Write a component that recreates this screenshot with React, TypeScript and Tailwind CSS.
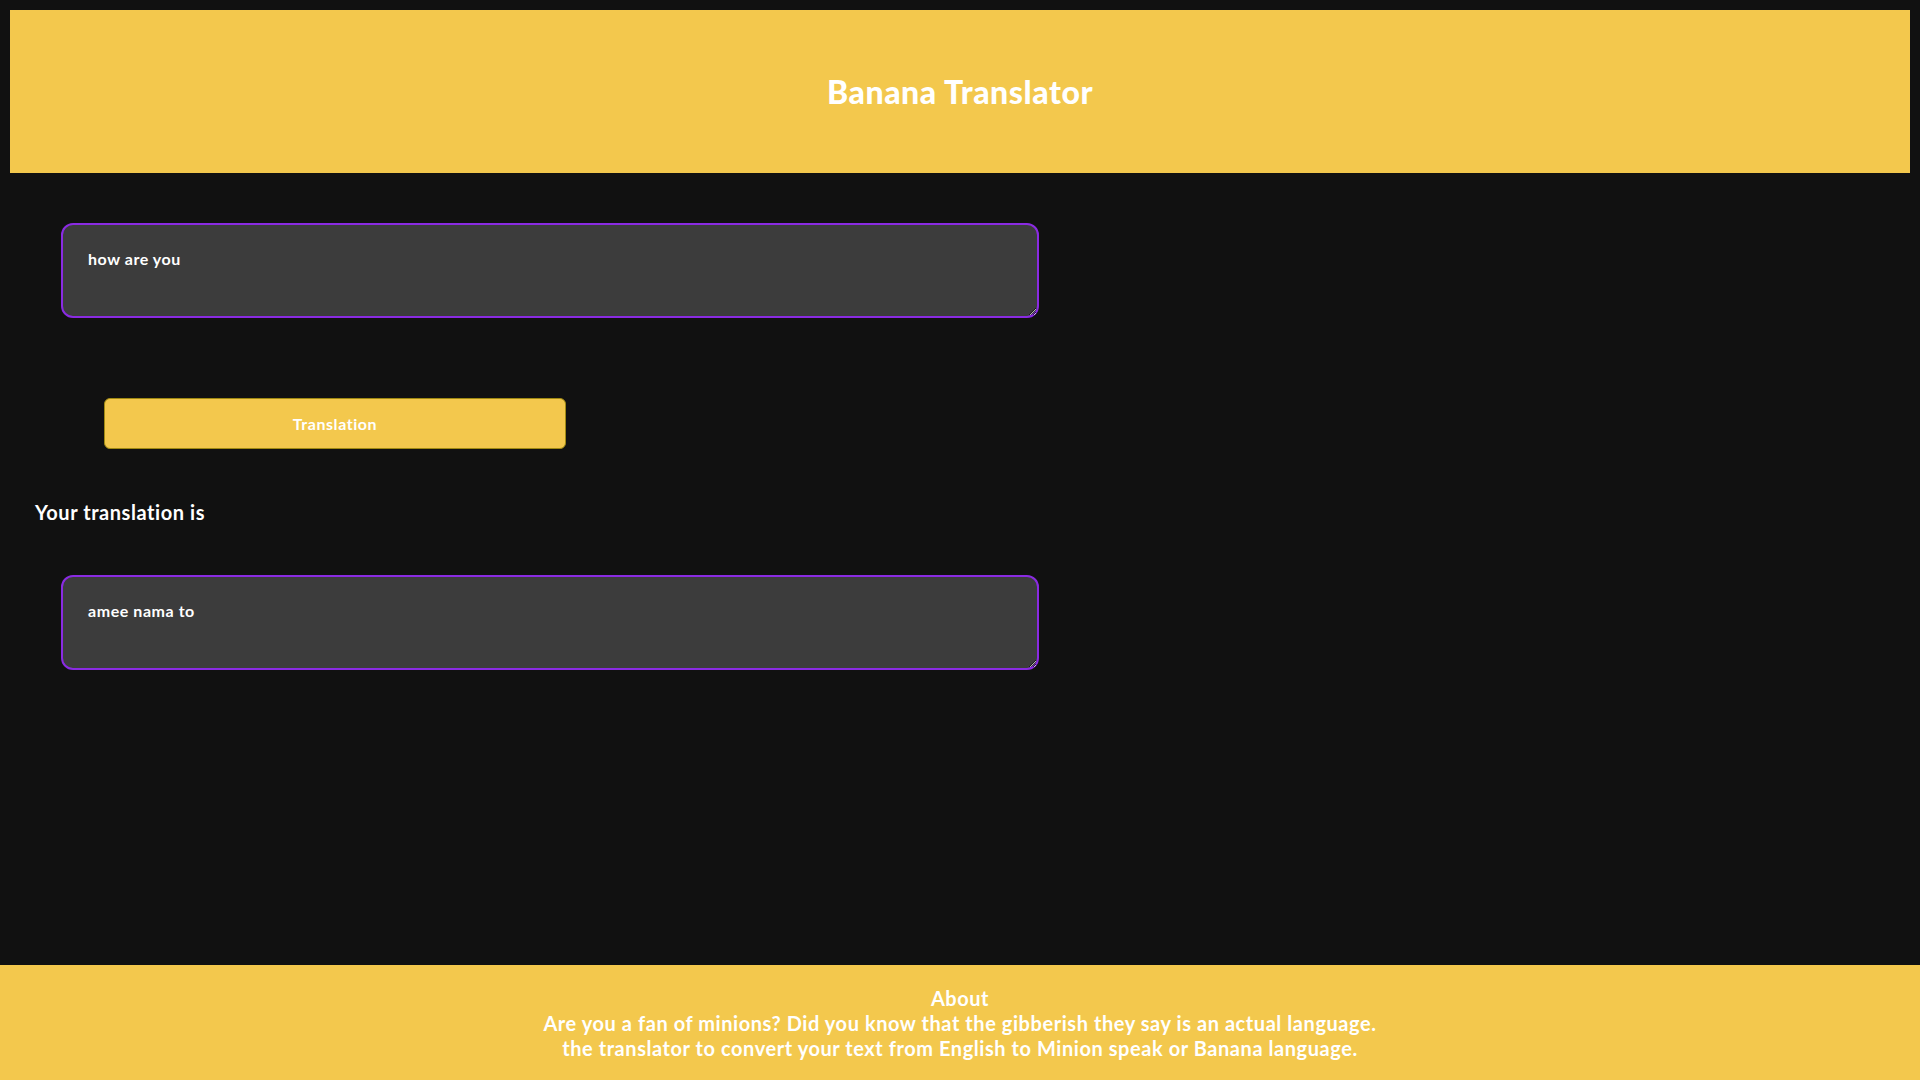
import React, { useState } from "react";

const font = { fontFamily: "Lato, 'Open Sans', sans-serif" };

const App = () => {
  const [input, setInput] = useState("how are you");
  const [output, setOutput] = useState("amee nama to");

  const handleTranslate = () => {
    // no network here, so just keep the sample output
    setOutput(output);
  };

  return (
    <div
      className="min-h-screen flex flex-col bg-[#111111] text-white tracking-[0.035em]"
      style={font}
    >
      <header className="m-[10px] mb-0 h-[163px] bg-[#f3c84d] flex items-center justify-center">
        <h1 className="text-[32px] font-black">Banana Translator</h1>
      </header>

      <main className="flex-1 flex flex-col items-start pt-[50px]">
        <textarea
          value={input}
          onChange={(e) => setInput(e.target.value)}
          className="ml-[61px] w-[978px] h-[95px] bg-[#3c3c3c] border-2 border-[#8a2be2] rounded-xl px-[25px] pt-[22px] text-[16px] font-bold text-white outline-none"
        />

        <button
          onClick={handleTranslate}
          className="mt-[80px] ml-[104px] w-[462px] h-[51px] bg-[#f3c84d] border border-[#a08a12] rounded-md text-[16px] font-bold text-white"
        >
          Translation
        </button>

        <h2 className="mt-[51px] ml-[35px] text-[20px] leading-[25px] font-bold">
          Your translation is
        </h2>

        <textarea
          value={output}
          readOnly
          className="mt-[50px] ml-[61px] w-[978px] h-[95px] bg-[#3c3c3c] border-2 border-[#8a2be2] rounded-xl px-[25px] pt-[22px] text-[16px] font-bold text-white outline-none"
        />
      </main>

      <footer className="h-[115px] bg-[#f3c84d] pt-[21px] text-center text-[20px] leading-[25px] font-bold">
        <div>About</div>
        <p>
          Are you a fan of minions? Did you know that the gibberish they say is
          an actual language.
          <br />
          the translator to convert your text from English to Minion speak or
          Banana language.
        </p>
      </footer>
    </div>
  );
};

export default App;
